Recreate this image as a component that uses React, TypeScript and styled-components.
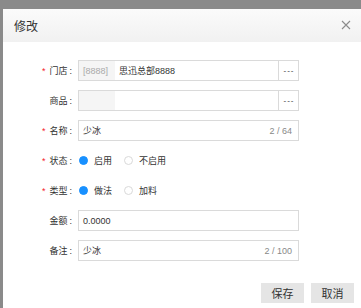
import React from 'react'
import styled, { createGlobalStyle } from 'styled-components'

const GlobalStyle = createGlobalStyle`
	html, body {
		margin: 0;
		padding: 0;
		background: #8a8a8a;
	}
	* {
		box-sizing: border-box;
	}
`

interface IRow {
	label: string
	required?: boolean
}

function CloseIcon () {
	return (
		<svg width='10' height='10' viewBox='0 0 10 10'>
			<path d='M1 1 L9 9 M9 1 L1 9' stroke='#8c8c8c' strokeWidth='1.1' fill='none' />
		</svg>
	)
}

function Row (props: IRow & { children: React.ReactNode }) {
	return (
		<FormRow>
			<Label>
				{props.required && <Star>*</Star>}
				{props.label}<Colon>:</Colon>
			</Label>
			{props.children}
		</FormRow>
	)
}

function App () {
	return (
		<Page>
			<GlobalStyle />
			<Dialog>
				<Header>
					<Title>修改</Title>
					<Close><CloseIcon /></Close>
				</Header>
				<Form>
					<Row label='门店' required>
						<Field>
							<Prefix>[8888]</Prefix>
							<Value>思迅总部8888</Value>
							<PickButton>---</PickButton>
						</Field>
					</Row>
					<Row label='商品'>
						<Field>
							<Prefix />
							<Value />
							<PickButton>---</PickButton>
						</Field>
					</Row>
					<Row label='名称' required>
						<Field>
							<Value>少冰</Value>
							<Counter>2 / 64</Counter>
						</Field>
					</Row>
					<Row label='状态' required>
						<RadioGroup>
							<RadioItem><Radio checked />启用</RadioItem>
							<RadioItem><Radio />不启用</RadioItem>
						</RadioGroup>
					</Row>
					<Row label='类型' required>
						<RadioGroup>
							<RadioItem><Radio checked />做法</RadioItem>
							<RadioItem><Radio />加料</RadioItem>
						</RadioGroup>
					</Row>
					<Row label='金额'>
						<Field>
							<Value>0.0000</Value>
						</Field>
					</Row>
					<Row label='备注'>
						<Field>
							<Value>少冰</Value>
							<Counter>2 / 100</Counter>
						</Field>
					</Row>
				</Form>
				<Footer>
					<Button>保存</Button>
					<Button>取消</Button>
				</Footer>
			</Dialog>
		</Page>
	)
}

const Page = styled.div`
	width: 361px;
	height: 308px;
	padding: 9px 0 0 3px;
	background: #8a8a8a;
	overflow: hidden;
	font-family: "Liberation Sans", "Noto Sans CJK SC", sans-serif;
`
const Dialog = styled.div`
	width: 358px;
	height: 299px;
	background: #fff;
	display: flex;
	flex-direction: column;
`
const Header = styled.div`
	height: 33px;
	padding: 0 10px 0 11px;
	display: flex;
	align-items: center;
	justify-content: space-between;
	background: linear-gradient(#fbfbfb, #f1f1f1);
`
const Title = styled.h4`
	margin: 0;
	font-size: 12px;
	font-weight: 400;
	color: #333;
`
const Close = styled.span`
	display: flex;
	width: 10px;
	height: 10px;
	margin-top: -1px;
`
const Form = styled.div`
	padding-top: 18px;
	display: flex;
	flex-direction: column;
	gap: 9px;
`
const FormRow = styled.div`
	height: 21px;
	display: flex;
	align-items: center;
	gap: 6px;
`
const Label = styled.label`
	width: 69px;
	text-align: right;
	font-size: 9px;
	color: #333;
	white-space: nowrap;
`
const Colon = styled.span`
	margin-left: 2px;
`
const Star = styled.span`
	color: #f5222d;
	margin-right: 4px;
	font-size: 9px;
`
const Field = styled.div`
	width: 221px;
	height: 21px;
	border: 1px solid #dadada;
	display: flex;
	align-items: stretch;
	font-size: 9px;
	color: #333;
`
const Prefix = styled.span`
	width: 36px;
	background: #f5f5f5;
	color: #aaa;
	padding-left: 4px;
	display: flex;
	align-items: center;
`
const Value = styled.span`
	flex: 1;
	padding-left: 4px;
	display: flex;
	align-items: center;
	white-space: nowrap;
`
const Counter = styled.span`
	color: #888;
	padding-right: 6px;
	display: flex;
	align-items: center;
`
const PickButton = styled.span`
	width: 20px;
	border-left: 1px solid #dadada;
	display: flex;
	align-items: center;
	justify-content: center;
	padding-left: 1px;
	font-size: 8px;
	letter-spacing: 1px;
	color: #333;
`
const RadioGroup = styled.div`
	display: flex;
	align-items: center;
	font-size: 9px;
	color: #333;
`
const RadioItem = styled.span`
	width: 45px;
	display: flex;
	align-items: center;
	gap: 6px;
	white-space: nowrap;
`
const Radio = styled.span<{ checked?: boolean }>`
	width: 9px;
	height: 9px;
	border-radius: 50%;
	border: 1px solid ${props => props.checked ? '#1890ff' : '#d9d9d9'};
	background: ${props => props.checked ? '#1890ff' : '#fff'};
	margin-left: 1px;
`
const Footer = styled.div`
	margin-top: 22px;
	padding-right: 7px;
	display: flex;
	justify-content: flex-end;
	gap: 7px;
`
const Button = styled.button`
	width: 43px;
	height: 20px;
	border: none;
	background: #e5e5e5;
	color: #333;
	font-family: inherit;
	font-size: 11px;
	padding: 0;
	cursor: pointer;
`

export default App
